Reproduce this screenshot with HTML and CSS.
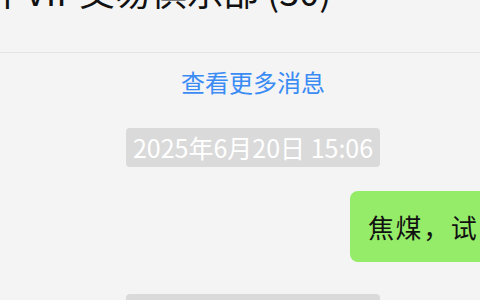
FILE: index.html
```html
<!DOCTYPE html>
<html lang="zh-CN">

<head>
  <meta charset="UTF-8">
  <title>金牛VIP交易俱乐部</title>
  <link rel="stylesheet" href="styles.css">
</head>

<body>
  <div class="app">
    <div class="header">
      <div class="title">金牛VIP交易俱乐部 (30)</div>
    </div>
    <div class="chat">
      <a href="javascript:;" class="more">查看更多消息</a>
      <div class="time"><span>2025年6月20日 15:06</span></div>
      <div class="row self">
        <div class="bubble">焦煤，试多单，止损设在前低</div>
      </div>
      <div class="time"><span>2025年6月20日 15:12</span></div>
    </div>
  </div>
</body>

</html>
```

FILE: styles.css
```css
html,
body {
  margin: 0;
  padding: 0;
  overflow: hidden;
  background-color: #f4f4f4;
}

body {
  width: 480px;
  height: 300px;
  font-family: "Noto Sans CJK SC", "Noto Sans", sans-serif;
}

.app {
  width: 506px;
}

.header {
  height: 52px;
  overflow: hidden;
  background-color: #f4f4f4;
  border-bottom: 1px solid #e4e4e4;
}

.title {
  margin-top: -28px;
  margin-left: -47px;
  font-size: 36px;
  line-height: 36px;
  color: #111;
  white-space: nowrap;
}

.chat {
  padding-top: 12px;
  text-align: center;
}

.more {
  display: inline-block;
  font-size: 24px;
  line-height: 34px;
  color: #3a8cf4;
  text-decoration: none;
}

.time {
  margin-top: 29px;
}

.time span {
  display: inline-block;
  padding: 0 7px;
  font-size: 25px;
  line-height: 39px;
  color: #fff;
  background-color: #dadada;
  border-radius: 4px;
}

.row {
  margin-top: 24px;
  text-align: left;
}

.self {
  padding-left: 350px;
  white-space: nowrap;
}

.bubble {
  display: inline-block;
  padding: 18px 18px;
  font-size: 26px;
  letter-spacing: 1.6px;
  line-height: 35px;
  color: #111;
  background-color: #95ec69;
  border-radius: 8px;
}

.row + .time {
  margin-top: 32px;
}
```
